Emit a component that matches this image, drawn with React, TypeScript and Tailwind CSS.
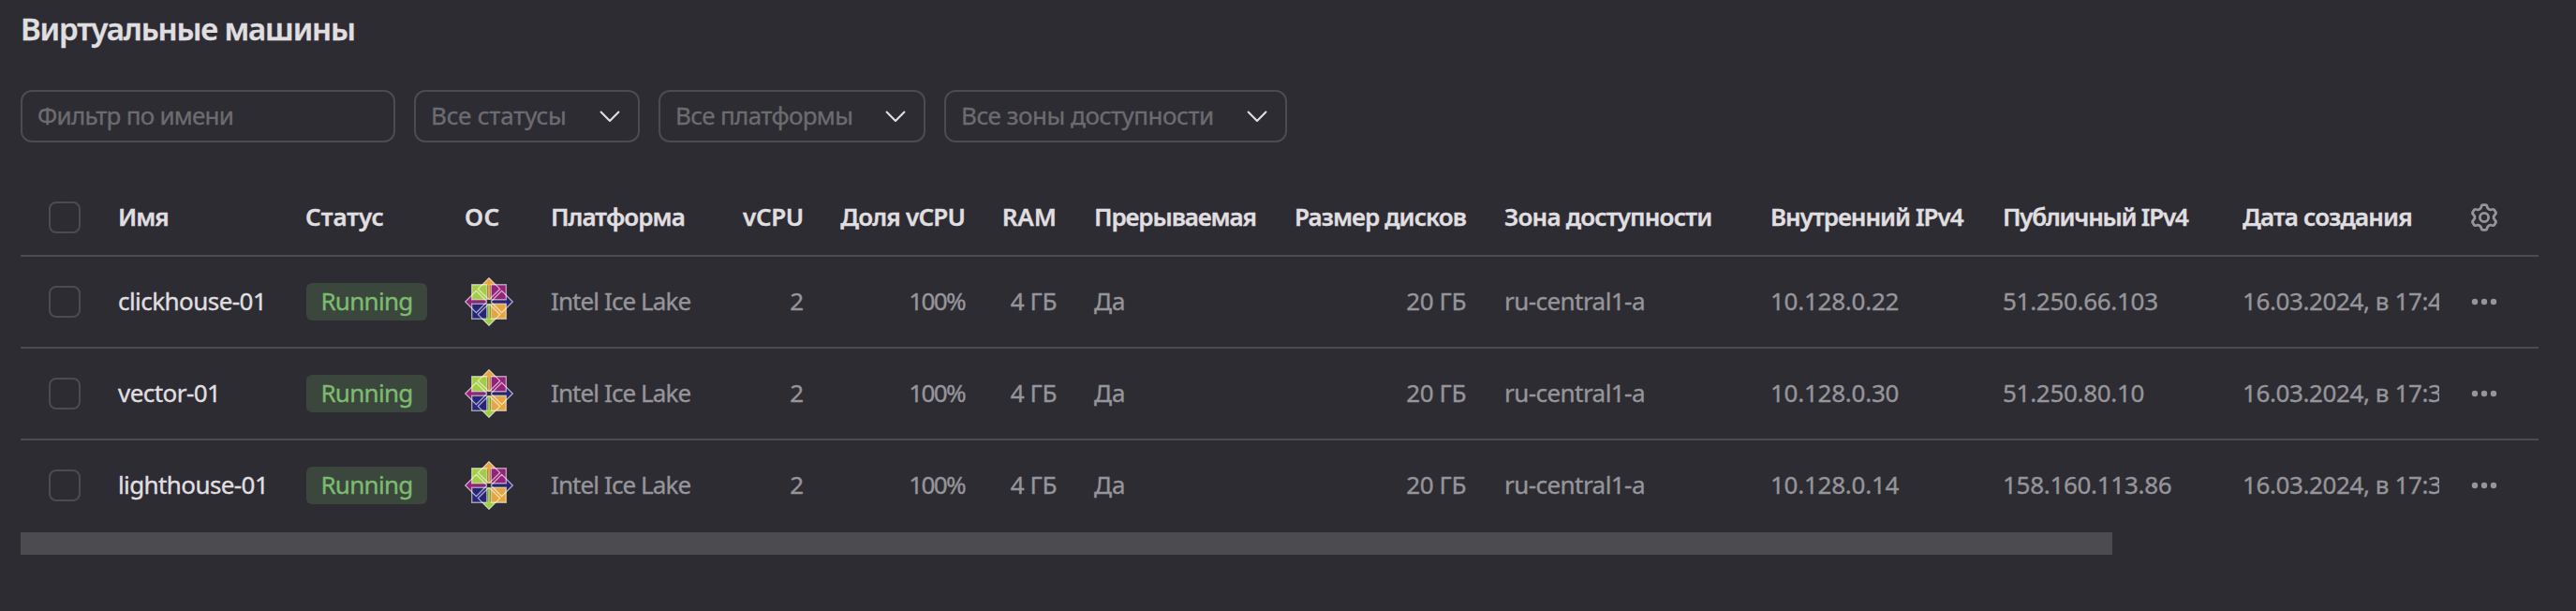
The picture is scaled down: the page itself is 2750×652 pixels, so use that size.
import type { ReactNode } from "react";

function rotate(x: number, y: number, deg: number): string {
  const a = (deg * Math.PI) / 180;
  return `${(x * Math.cos(a) - y * Math.sin(a)).toFixed(2)} ${(x * Math.sin(a) + y * Math.cos(a)).toFixed(2)}`;
}

const gearPath =
  [0, 60, 120, 180, 240, 300]
    .map((d) => {
      const p = (x: number, y: number) => rotate(x, y, d);
      const n = (x: number, y: number) => rotate(x, y, d + 60);
      return `${d === 0 ? "M" : "L"}${p(-3.1, -11.6)}Q${p(-2.8, -13.4)} ${p(-1.3, -13.4)}L${p(1.3, -13.4)}Q${p(2.8, -13.4)} ${p(3.1, -11.6)}C${p(3.6, -8.9)} ${n(-3.6, -8.9)} ${n(-3.1, -11.6)}`;
    })
    .join("") + "Z";

function GearIcon() {
  return (
    <svg className="h-8 w-8" viewBox="-16 -16 32 32" fill="none" stroke="#969599" strokeWidth="2.8" strokeLinejoin="round">
      <path d={gearPath} />
      <circle r="4.6" />
    </svg>
  );
}

function DotsIcon() {
  return (
    <svg className="h-8 w-8" viewBox="-16 -16 32 32" fill="#969599">
      <circle cx="-10" r="3.2" />
      <circle r="3.2" />
      <circle cx="10" r="3.2" />
    </svg>
  );
}

function Chevron() {
  return (
    <svg className="h-6 w-6" viewBox="0 0 24 24" fill="none" stroke="#e0dfe0" strokeWidth="2.1" strokeLinecap="round" strokeLinejoin="round">
      <path d="M2.6 7.6 12 17l9.400-9.400" />
    </svg>
  );
}

function CentosLogo() {
  return (
    <svg className="h-[54px] w-[54px]" viewBox="-27 -27 54 54">
      <path d="M0-25.500 8-17.500H1.500V-2h-3V-17.500H-8Z" fill="#e5a63f" />
      <path d="M25.500 0 17.500 8V1.500H2v-3H17.500V-8Z" fill="#262577" />
      <path d="M0 25.500-8 17.500H-1.500V2h3V17.500H8Z" fill="#a4cd45" />
      <path d="M-25.500 0-17.500-8V-1.500H-2v3H-17.500V8Z" fill="#932279" />
      <g stroke="#ffffff" strokeOpacity="0.55" strokeWidth="1.4">
        <path d="M-18.300-18.300H-2.300V-2.300H-18.300Z" fill="#a4cd45" />
        <path d="M18.300-18.300H2.300V-2.300H18.300Z" fill="#932279" />
        <path d="M18.300 18.300H2.300V2.300H18.300Z" fill="#e5a63f" />
        <path d="M-18.300 18.300H-2.300V2.300H-18.300Z" fill="#262577" />
      </g>
      <g fill="none" stroke="#ffffff" strokeOpacity="0.65" strokeWidth="1.200">
        <path d="M0-25.300 11.700-13.600 0-2-11.700-13.600Z" />
        <path d="M25.300 0 13.600 11.700 2 0 13.600-11.700Z" />
        <path d="M0 25.300-11.700 13.600 0 2 11.700 13.600Z" />
        <path d="M-25.300 0-13.600-11.700-2 0-13.600 11.700Z" />
      </g>
      <path d="M0-2.400 2.400 0 0 2.400-2.400 0Z" fill="#2d2c33" />
    </svg>
  );
}

function Select({ label, width, tracking }: { label: string; width: string; tracking: string }) {
  return (
    <button className={`flex h-14 items-center justify-between rounded-[12px] border-2 border-[#4c4b50] pl-4 pr-[18px] text-[#6c6b70] ${width}`}>
      <span className={`whitespace-nowrap pb-[2px] ${tracking}`}>{label}</span>
      <Chevron />
    </button>
  );
}

function Checkbox() {
  return <span className="block h-[34px] w-[34px] rounded-[8px] border-2 border-[#4c4b50]" />;
}

function Cell({ className, children }: { className: string; children?: ReactNode }) {
  return <div className={`flex h-full shrink-0 items-center whitespace-nowrap ${className}`}>{children}</div>;
}

const cols = {
  check: "w-[104px] pl-[30px]",
  name: "w-[200px] pb-[2px]",
  status: "w-[171px]",
  os: "w-[91px]",
  platform: "w-[192px] pb-[2px]",
  vcpu: "w-[78px] justify-end pb-[2px]",
  share: "w-[172px] justify-end pb-[2px]",
  ram: "w-[98px] justify-end pb-[2px]",
  preempt: "w-[241px] pl-10 pb-[2px]",
  disk: "w-[196px] justify-end pb-[2px]",
  zone: "w-[325px] pl-[41px] pb-[2px]",
  inner: "w-[248px] pb-[2px]",
  pub: "w-[256px] pb-[2px]",
  date: "w-[210px] overflow-hidden pb-[2px]",
  menu: "w-[106px] pl-8",
};

const machines = [
  { name: "clickhouse-01", nameTracking: "tracking-[-0.55px]", inner: "10.128.0.22", pub: "51.250.66.103", date: "16.03.2024, в 17:4" },
  { name: "vector-01", nameTracking: "tracking-[-0.55px]", inner: "10.128.0.30", pub: "51.250.80.10", date: "16.03.2024, в 17:3" },
  { name: "lighthouse-01", nameTracking: "tracking-[-0.6px]", inner: "10.128.0.14", pub: "158.160.113.86", date: "16.03.2024, в 17:3" },
];

export default function App() {
  return (
    <div className="h-[652px] w-[2750px] overflow-hidden bg-[#2d2c33] px-[22px] pt-[9px] font-['Noto_Sans',sans-serif] text-[26px] leading-[36px] text-[#969599] [-webkit-text-stroke:0.35px]">
      <h1 className="text-[33px] font-semibold leading-[44px] tracking-[-1.15px] text-[#e0dfe0]">Виртуальные машины</h1>

      <div className="mt-[43px] flex text-[#6c6b70]">
        <div className="flex h-14 w-[400px] items-center rounded-[12px] border-2 border-[#4c4b50] px-4">
          <span className="pb-[2px] tracking-[-0.75px]">Фильтр по имени</span>
        </div>
        <div className="ml-5 flex gap-5">
          <Select label="Все статусы" width="w-[241px]" tracking="tracking-[-0.2px]" />
          <Select label="Все платформы" width="w-[285px]" tracking="tracking-[-0.65px]" />
          <Select label="Все зоны доступности" width="w-[366px]" tracking="tracking-[-0.45px]" />
        </div>
      </div>

      <div className="mt-10 w-[2688px]">
        <div className="flex h-[82px] border-b-2 border-[#4c4b50] font-semibold text-[#e0dfe0]">
          <Cell className={cols.check}><Checkbox /></Cell>
          <Cell className={cols.name}><span className="tracking-[-1px]">Имя</span></Cell>
          <Cell className={cols.status}><span className="pb-[2px]">Статус</span></Cell>
          <Cell className={cols.os}><span className="-ml-[1px] pb-[2px] tracking-[0.5px]">ОС</span></Cell>
          <Cell className={cols.platform}><span className="tracking-[-0.95px]">Платформа</span></Cell>
          <Cell className={cols.vcpu}><span className="tracking-[-0.3px]">vCPU</span></Cell>
          <Cell className={cols.share}><span className="tracking-[-0.8px]">Доля vCPU</span></Cell>
          <Cell className={cols.ram}><span>RAM</span></Cell>
          <Cell className={cols.preempt}><span className="tracking-[-1.1px]">Прерываемая</span></Cell>
          <Cell className={cols.disk}><span className="tracking-[-0.92px]">Размер дисков</span></Cell>
          <Cell className={cols.zone}><span className="tracking-[-0.8px]">Зона доступности</span></Cell>
          <Cell className={cols.inner}><span className="tracking-[-1px]">Внутренний IPv4</span></Cell>
          <Cell className={cols.pub}><span className="tracking-[-1.25px]">Публичный IPv4</span></Cell>
          <Cell className={cols.date}><span className="tracking-[-0.83px]">Дата создания</span></Cell>
          <Cell className={cols.menu}><GearIcon /></Cell>
        </div>
        {machines.map((m) => (
          <div key={m.name} className="flex h-[98px] border-[#4c4b50] not-nth-last-2:border-b-2 nth-last-2:pb-[2px]">
            <Cell className={cols.check}><Checkbox /></Cell>
            <Cell className={cols.name}><span className={`text-[#e0dfe0] ${m.nameTracking}`}>{m.name}</span></Cell>
            <Cell className={cols.status}>
              <span className="ml-[1px] flex h-10 w-[129px] items-center justify-center rounded-[6px] bg-[#3b463c] pb-[2px] tracking-[-0.7px] text-[#7cbb70]">Running</span>
            </Cell>
            <Cell className={cols.os}><span className="-ml-[2px]"><CentosLogo /></span></Cell>
            <Cell className={cols.platform}><span className="tracking-[-0.9px]">Intel Ice Lake</span></Cell>
            <Cell className={cols.vcpu}>2</Cell>
            <Cell className={cols.share}><span className="tracking-[-1.6px]">100%</span></Cell>
            <Cell className={cols.ram}><span className="tracking-[-0.4px]">4 ГБ</span></Cell>
            <Cell className={cols.preempt}>Да</Cell>
            <Cell className={cols.disk}><span className="tracking-[-0.4px]">20 ГБ</span></Cell>
            <Cell className={cols.zone}><span className="tracking-[-0.55px]">ru-central1-a</span></Cell>
            <Cell className={cols.inner}><span className="tracking-[-0.25px]">{m.inner}</span></Cell>
            <Cell className={cols.pub}><span className="tracking-[-0.3px]">{m.pub}</span></Cell>
            <Cell className={cols.date}><span className="tracking-[-0.4px]">{m.date}</span></Cell>
            <Cell className={cols.menu}><DotsIcon /></Cell>
          </div>
        ))}
        <div className="h-6 w-[2233px] bg-[#4c4b50]" />
      </div>
    </div>
  );
}
